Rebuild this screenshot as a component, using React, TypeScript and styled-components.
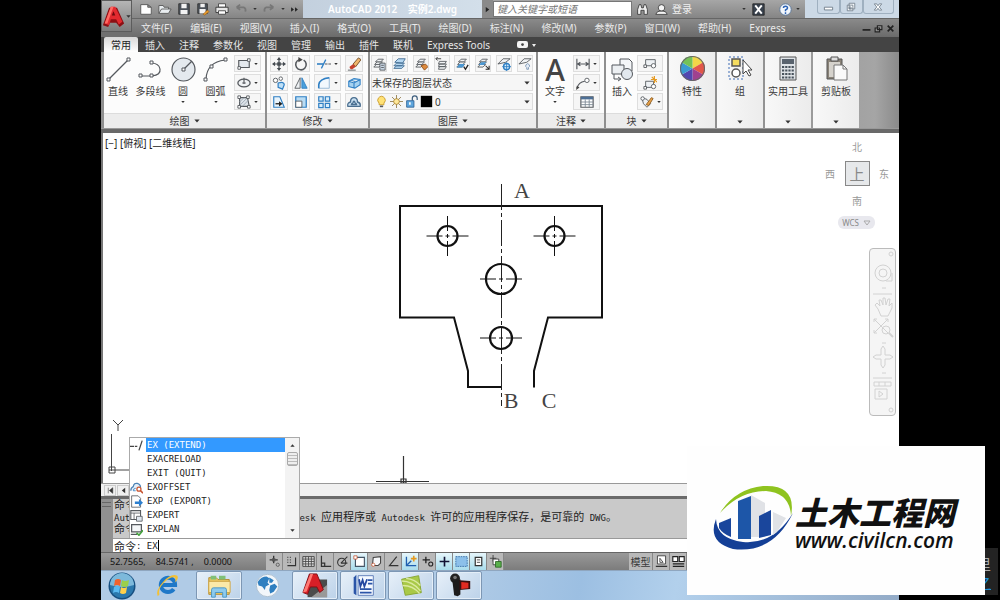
import React from 'react';
import styled, { createGlobalStyle, css } from 'styled-components';

const UI = `'Noto Sans', 'Noto Sans CJK SC', sans-serif`;
const MONO = `'DejaVu Sans Mono', 'Noto Sans CJK SC', monospace`;

const GlobalStyle = createGlobalStyle`
  * { box-sizing: border-box; }
  body { margin: 0; background: #000; font-family: ${UI}; font-size: 10px; line-height: 12px; color: #3a3a3a; }
  button, input, select { font: inherit; color: inherit; margin: 0; padding: 0; border: 0; background: none; outline: none; border-radius: 0; }
  ul { margin: 0; padding: 0; list-style: none; }
`;

/* ---------- icon drawings, 16 x 16 unless listed in `boxes` ---------- */

const G = '#55595e';
const B = '#2f7fc4';

const layers = (
  <g fill="#f2f4f6" stroke={G}>
    <path d="M2 11.500l3-3h6l-3 3z" />
    <path d="M3 8.500l3-3h6l-3 3z" />
    <path d="M4 5.500l3-3h6l-3 3z" />
  </g>
);

const drawings: Record<string, React.ReactNode> = {
  new: <path d="M2 3h8l4 3v8H2zM10 3v3h4" fill="#fff" stroke="#555" />,
  open: <path d="M1 13V4h5l1 2h5v2M1 13l3-5h11l-3 5z" fill="#e9edf0" stroke="#555" />,
  save: <><path d="M2 2h12v12H2z" fill="#4b5159" stroke="#333" /><path d="M5 2h6v5H5zM4 9h8v5H4z" fill="#f2f2f2" /></>,
  saveas: <><path d="M2 2h11v11H2z" fill="#4b5159" stroke="#333" /><path d="M5 2h5v4H5zM4 8h7v5H4z" fill="#f2f2f2" /><path d="M8 14l5-5 2 2-5 4z" fill="#e79a2c" stroke="#7b4a10" strokeWidth=".5" /></>,
  print: <><path d="M4 2h8v4H4z" fill="#fff" stroke="#444" /><path d="M1 6h14v6H1z" fill="#e6e6e6" stroke="#333" /><path d="M4 10h8v4H4z" fill="#fff" stroke="#444" /></>,
  undo: <path d="M3 6h8q3 1 2 5M3 6l4-3M3 6l4 3" fill="none" stroke="#777" strokeWidth="2" />,
  redo: <path d="M13 6H5q-3 1-2 5M13 6l-4-3M13 6l-4 3" fill="none" stroke="#777" strokeWidth="2" />,
  more: <path d="M2 4l5 4-5 4zM9 4l5 4-5 4z" fill="#222" />,
  play: <path d="M4 2l8 6-8 6z" fill="#222" />,
  caret: <path d="M1 4h14l-7 8z" fill="#333" />,
  binoc: <path d="M2 14V8l2-6h2l1 4h2l1-4h2l2 6v6h-4V9H6v5z" fill="#eee" stroke="#333" />,
  user: <><circle cx="8" cy="6" r="4" fill="#f5f5f5" stroke="#333" /><path d="M1 14q1-4 5-4h4q4 0 5 4z" fill="#f5f5f5" stroke="#333" /></>,
  exchange: <><path d="M1 1h14v14H1z" fill="#39424e" stroke="#222" /><path d="M4 3l4 5-4 5M12 3L8 8l4 5" fill="none" stroke="#fff" strokeWidth="2.400" /></>,
  help: <><circle cx="8" cy="8" r="7" fill="#f3f7fc" stroke="#54749c" /><path d="M5.500 6Q5.500 4 8 4t2.500 2.200Q10.500 7.500 8 8.600V10M8 11.500v2" fill="none" stroke="#2b62b5" strokeWidth="1.800" /></>,
  min: <path d="M2 9h12v4H2z" fill="#fff" stroke="#6d7a88" strokeWidth="1.300" />,
  max: <path d="M5 2h9v9H5zM2 5h9v9H2zM5 8h3v3H5z" fill="#f7fafc" stroke="#6d7a88" strokeWidth="1.300" />,
  close: <path d="M2 3h4l2 3 2-3h4l-4 5 4 5h-4l-2-3-2 3H2l4-5z" fill="#fff" stroke="#6d7a88" strokeWidth="1.300" />,
  dmin: <path d="M1 9h14v3H1z" fill="#222" />,
  dmax: <path d="M6 3h8v7H6zM2 7h8v7H2z" fill="#999" stroke="#222" strokeWidth="2" />,
  dclose: <path d="M3 3l10 10M13 3L3 13" stroke="#222" strokeWidth="3" />,
  cam: <><rect x="0" y="3" width="16" height="10" rx="3" fill="#f4f4f4" /><circle cx="8" cy="8" r="2" fill="#444" /></>,

  line: <><path d="M3 22L22 3" stroke={G} strokeWidth="1.200" /><path d="M1 21h3v3H1zM21 1h3v3h-3z" fill="#fff" stroke={G} /></>,
  pline: <><path d="M2 19h12q9-1 8-7-1-6-9-6" fill="none" stroke={G} strokeWidth="1.200" /><path d="M1 17h3v3H1zM12 17h3v3h-3zM12 4h3v3h-3z" fill="#fff" stroke={G} /></>,
  circle: <><circle cx="12.500" cy="12.500" r="11.500" fill="#e4e9ee" stroke={G} strokeWidth="1.200" /><path d="M12 13l9-9" stroke={G} strokeWidth="1.200" /><path d="M11 11h3v3h-3z" fill="#fff" stroke={G} /></>,
  arc: <><path d="M3 22Q4 5 22 3" fill="none" stroke={G} strokeWidth="1.200" /><path d="M1 21h3v3H1zM7 8h3v3H7zM21 1h3v3h-3z" fill="#fff" stroke={G} /></>,
  rect: <><path d="M2 4h12v8H2z" fill="#e4e9ee" stroke={G} strokeWidth="1.300" /><path d="M1 11h3v3H1zM12 2h3v3h-3z" fill="#fff" stroke={G} /></>,
  ellipse: <><ellipse cx="8" cy="8" rx="7" ry="4.500" fill="#f0f2f4" stroke={G} strokeWidth="1.500" /><path d="M8 2v7M6 8h4" stroke={G} strokeWidth="1.300" /></>,
  hatch: <><path d="M3 3h9l2 10H3z" fill="#dde3e9" stroke={G} strokeWidth="1.300" /><path d="M3 12l9-9M6 13l7-7M3 8l5-5" stroke="#9aa6b1" /><path d="M1 1h3v3H1zM11 1h3v3h-3zM1 12h3v3H1zM12 12h3v3h-3z" fill="#fff" stroke={G} /></>,

  move: <path d="M8 0l2.500 3.500h-5zM8 16l-2.500-3.500h5zM0 8l3.500-2.500v5zM16 8l-3.500 2.500v-5zM7.300 3h1.400v10H7.300zM3 7.300h10v1.400H3zM6 6h4v4H6z" fill="#444a50" />,
  rotate: <><path d="M6 3a6 6 0 1 0 5 .5" fill="none" stroke={G} strokeWidth="1.800" /><path d="M5 0l5 3-5 3z" fill="#444" /></>,
  trim: <><path d="M5 13L10 3" stroke={B} strokeWidth="1.500" /><path d="M0 8h7" stroke={B} strokeWidth="1.800" /><path d="M9 8h3M13 8h3" stroke={G} strokeWidth="1.300" /></>,
  erase: <><path d="M7 8l6-7 3 2-6 8z" fill="#f0b66c" stroke="#6b4720" /><path d="M3 11l4-3 3 3-4 3q-3 0-3-3z" fill="#c5402c" /><path d="M1 15h9" stroke={G} /></>,
  copy: <><circle cx="4" cy="5" r="2.500" fill="#fff" stroke={G} /><circle cx="10" cy="3" r="2" fill="#fff" stroke={G} /><path d="M7 8q7-2 7 2l-2 5-5-2z" fill="#bfe0f7" stroke={B} strokeWidth="1.400" /></>,
  mirror: <><path d="M7 2v12H1z" fill="#eef1f4" stroke={G} /><path d="M9 2v12h6z" fill="#4ba0dc" stroke={B} /></>,
  fillet: <><path d="M2 14V10Q3 3 14 2v12z" fill="#f2f8fd" stroke="#8fb4d2" /><path d="M2 14V10Q3 3 14 2" fill="none" stroke={B} strokeWidth="1.800" /></>,
  explode: <path d="M2 6l6-3 7 1v6l-6 4-7-2zM2 6l6 2 7-4M8 8v6M5 5l6 2" fill="#a6d2f1" stroke={B} strokeWidth="1.200" />,
  stretch: <><path d="M2 2h7l5 12H2z" fill="#e8f3fb" stroke={B} strokeWidth="1.300" /><path d="M4 10h5" stroke="#222" strokeWidth="1.500" /><path d="M8 7l4 3-4 3z" fill="#222" /></>,
  scale: <><path d="M2 2h12v12H2z" fill="#b9dcf4" stroke={B} strokeWidth="1.400" /><path d="M2 7h7v7H2z" fill="#fff" stroke={G} /></>,
  array: <path d="M2 2h5v5H2zM9.500 2h5v5h-5zM2 9.500h5v5H2zM9.500 9.500h5v5h-5z" fill="#d9edfa" stroke={B} strokeWidth="1.400" />,
  offset: <path d="M1 13q-1-4 3-5 0-5 4-5t4 5q4 1 3 5zM5 11q0-1 2-2 0-2 1-2t1 2q2 1 2 2z" fill="#c9dff0" stroke="#4b6f90" strokeWidth="1.500" />,

  lprop: <>{layers}<path d="M9 7h6v8H9z" fill="#c8d6e4" stroke={G} /><path d="M10.500 9.500h3M10.500 12h3" stroke={G} /></>,
  liso: <g fill="#b5d7f1" stroke="#3f6a91"><path d="M1 13l3-3h9l-3 3zM1 10l3-3h9l-3 3zM2 6l4-4h8l-3 5z" /></g>,
  lmatch: <>{layers}<path d="M8 10l5-2 3 3-4 4z" fill="#dd8a3d" stroke="#8d4f1e" /></>,
  lprev: <><path d="M5 5h8l-2 3H4zM5 8h8l-2 3H4zM5 11h8l-2 3H4z" fill="#f2f4f6" stroke={G} /><path d="M1 2h6M3 0L1 2l2 2" stroke="#333" fill="none" /></>,
  lset: <>{layers}<path d="M2 12l3-4h6l-2 4z" fill="#4a97d2" /><path d="M10 11l2 3 3-5" stroke="#222" fill="none" strokeWidth="1.500" /></>,
  ldown: <>{layers}<path d="M3 9l3-3h6l-3 3z" fill="#4a97d2" /><path d="M11 10l4 4M15 10v4h-4" stroke="#222" fill="none" strokeWidth="1.200" /></>,
  lfreeze: <><path d="M1 8l6-6h8l-5 4z" fill="#f2f4f6" stroke={G} /><circle cx="11" cy="11" r="3.500" fill="#d9effc" stroke={B} strokeWidth="1.600" /><path d="M11 6v10M6 11h10" stroke={B} /></>,
  loff: <><path d="M1 8l6-6h8l-5 4z" fill="#f2f4f6" stroke={G} /><path d="M9 9q2-3 4 0 1 2-1 3v2h-2v-2q-2-1-1-3z" fill="#e4ecf6" stroke="#7c96b4" /></>,
  bulb: <><path d="M5 10Q2 7 4 4q4-5 8 0 2 3-1 6v2H5z" fill="#ffe277" stroke="#c49320" /><path d="M6 14h4" stroke={G} strokeWidth="2" /></>,
  sun: <><path d="M8 0v16M0 8h16M2.500 2.500l11 11M13.500 2.500l-11 11" stroke="#8a7440" /><circle cx="8" cy="8" r="3.500" fill="#ffe89a" stroke="#a9802a" /></>,
  lock: <><path d="M9 7V4q0-3 3-3t3 3v2" fill="none" stroke="#3d5d7d" strokeWidth="1.500" /><path d="M2 7h9v8H2z" fill="#5fa6dd" stroke="#2a5f93" /><path d="M6 9v3" stroke="#fff" strokeWidth="2" /></>,
  black: <path d="M1 1h14v14H1z" fill="#000" />,

  dim: <path d="M1 2v12M15 2v12M2 8h12M5 6L2 8l3 2M11 6l3 2-3 2" fill="none" stroke={G} strokeWidth="1.300" />,
  leader: <><path d="M1 14Q3 7 10 6" fill="none" stroke={G} strokeWidth="1.300" /><circle cx="12.500" cy="5" r="2.500" fill="#fff" stroke={G} /><path d="M0 16l1-5 3 2z" fill="#444" /></>,
  table: <><path d="M1 2h14v12H1z" fill="#fff" stroke={G} strokeWidth="1.300" /><path d="M1 2h14v3H1z" fill="#4d6f95" /><path d="M1 8h14M1 11h14M6 5v9M10.500 5v9" stroke="#7c8894" /></>,
  insert: <><path d="M10 2h9l3 3v9H10z" fill="#f4f6f8" stroke={G} /><path d="M2 8h12v9H2z" fill="#eceff2" stroke={G} /><circle cx="17" cy="17" r="5.500" fill="#e2e8ee" stroke={G} /><path d="M4 17v5h6M8 20l3 2-3 2" fill="none" stroke={G} /></>,
  bcreate: <><path d="M3 3h11v7H3z" fill="#eef1f4" stroke={G} /><circle cx="12" cy="10" r="2.500" fill="#fff" stroke={G} /><path d="M1 9h3v3H1z" fill="#fff" stroke={G} /></>,
  bedit: <><path d="M3 6h9v7H3z" fill="#eef1f4" stroke={G} /><circle cx="12" cy="12" r="2.500" fill="#fff" stroke={G} /><path d="M1 12h3v3H1z" fill="#fff" stroke={G} /><path d="M13 0v8M9 4h7M10 1l6 6" stroke="#e59a22" strokeWidth="1.400" /></>,
  battr: <><path d="M2 3l6 2 4 5-4 4-4-4z" fill="#eef1f4" stroke={G} /><path d="M7 11l6-8 2 1-5 8z" fill="#e9a24a" stroke="#8c5a1c" /><circle cx="3" cy="4" r="2" fill="#fff" stroke={G} /></>,

  wheel: <><path d="M12 12V0a12 12 0 0 1 10.400 6z" fill="#f2d648" /><path d="M12 12l10.400-6a12 12 0 0 1 0 12z" fill="#e2574a" /><path d="M12 12l10.400 6A12 12 0 0 1 12 24z" fill="#a0418f" /><path d="M12 12v12a12 12 0 0 1-10.400-6z" fill="#5148b0" /><path d="M12 12L1.600 18a12 12 0 0 1 0-12z" fill="#3a9bd0" /><path d="M12 12L1.600 6A12 12 0 0 1 12 0z" fill="#74c257" /><circle cx="12" cy="12" r="11.500" fill="none" stroke="#666" /></>,
  group: <><path d="M1 1h14v22H1z" fill="none" stroke="#3e6db5" strokeDasharray="2 2" /><path d="M4 3h8v7H4z" fill="#f5dc5e" stroke="#555" strokeWidth="1.500" /><circle cx="8" cy="17" r="4" fill="#fff" stroke="#555" strokeWidth="1.500" /><path d="M15 4v14l3-3 3 5 2-1-3-5h4z" fill="#fff" stroke="#444" /></>,
  calc: <><path d="M4 1h16v23H4z" fill="#dfe3e7" stroke="#555" /><path d="M6 3h12v5H6z" fill="#59636e" /><path d="M6 11h12M6 14.500h12M6 18h12M6 21.500h12" stroke="#48525c" strokeWidth="2.200" strokeDasharray="2.200 1" /></>,
  paste: <><path d="M3 3h15v20H3z" fill="#8a8378" stroke="#555" /><path d="M5 6h11v15H5z" fill="#d5d2cc" /><path d="M7 1h7v4H7z" fill="#ddd" stroke="#555" /><path d="M10 9h9l4 4v11H10z" fill="#fafafa" stroke="#777" /><path d="M19 9v4h4" fill="none" stroke="#777" /></>,

  extend: <><path d="M0 9h5M6 9h3" stroke="#444" strokeWidth="1.500" /><path d="M11 14l4-12" stroke="#444" strokeWidth="1.500" /></>,
  cloud: <><path d="M1 12q0-4 3-5 1-5 5-4 4 1 4 5" fill="#e4eef7" stroke="#4b82b5" strokeWidth="1.500" /><path d="M4 12q0-3 3-3M4 12h3" stroke={B} fill="none" /><circle cx="11" cy="10" r="2.500" fill="#fff" stroke="#c7532f" strokeWidth="1.500" /><path d="M13 12l3 3" stroke="#c7532f" strokeWidth="2" /></>,
  export: <><path d="M2 1h8l3 3v11H2z" fill="#fff" stroke={G} /><path d="M6 8h5V5l5 4.500-5 4.500v-3H6z" fill="#2c7fcf" /></>,
  expert: <><path d="M1 2h12v11H1z" fill="#fff" stroke={G} strokeWidth="1.300" /><path d="M1 5h12M5 5v8" stroke={G} /><path d="M8 9h7v6H8z" fill="#dfe6ee" stroke={G} /></>,
  plan: <><path d="M2 2h12v9H2z" fill="#f5f7f9" stroke={G} strokeWidth="1.500" /><path d="M1 14h8" stroke={G} strokeWidth="1.500" /><path d="M8 12l3 3 5-6" stroke="#42a33b" strokeWidth="2" fill="none" /></>,

  s0: <><path d="M7 1v9M2 6h10" stroke="#333" strokeWidth="1.600" /><path d="M5 4h4v4H5z" fill="#555" /><circle cx="12" cy="12" r="2" fill="none" stroke="#555" /></>,
  s1: <path d="M3 3h1M6 3h1M3 6h1M6 6h1M3 9h1M6 9h1M3 13h10V3" fill="none" stroke="#333" strokeWidth="1.400" />,
  s2: <><path d="M1 2h14v12H1z" fill="#ddd" stroke="#333" /><path d="M1 5h14M1 8h14M1 11h14M4.500 2v12M8 2v12M11.500 2v12" stroke="#444" /></>,
  s3: <path d="M3 1v13h12M3 10h4v4" fill="none" stroke="#333" strokeWidth="1.500" />,
  s4: <><circle cx="7" cy="9" r="5" fill="none" stroke="#333" strokeWidth="1.300" /><path d="M6 10l8-8M6 10h8" stroke="#333" strokeWidth="1.300" /></>,
  s5: <><path d="M3 3h11v11H3z" fill="#fff" stroke="#456" strokeWidth="1.400" /><path d="M1 1h4v4H1z" fill="#fff" stroke="#c75b3a" /></>,
  s6: <><path d="M4 3l9-1v8l-3 3H3z" fill="#f6f8fa" stroke="#444" strokeWidth="1.300" /><circle cx="4" cy="12" r="2" fill="#fff" stroke="#c75b3a" /></>,
  s7: <path d="M12 2L3 13h11" fill="none" stroke="#333" strokeWidth="1.400" />,
  s8: <><path d="M3 2v11h12M4 12l5-5" fill="none" stroke="#1e5eae" strokeWidth="1.600" /><path d="M12 1v7M8.500 4.500h7" stroke="#e59a22" strokeWidth="2" /></>,
  s9: <><path d="M6 2v8M2 6h9" stroke="#222" strokeWidth="1.600" /><circle cx="12" cy="11" r="2.500" fill="none" stroke="#222" strokeWidth="1.300" /></>,
  s10: <path d="M8 2v12M2 8h12" stroke="#113" strokeWidth="2" />,
  s11: <path d="M1 2h14v12H1z" fill="#8cc0ea" stroke="#2b62a0" strokeDasharray="2 1" />,
  s12: <><path d="M4 3h8v10H4z" fill="#fff" stroke="#333" strokeWidth="1.500" /><path d="M6 6h4M6 9h4" stroke="#333" /></>,
  s13: <><path d="M5 0v8M1 4h8" stroke="#333" /><path d="M5 5h7v7H5z" fill="#fff" stroke="#333" /><path d="M8 8h7v7H8z" fill="#59b04a" stroke="#2a6322" /></>,
  layout: <><path d="M3 1h10v10H3z" fill="#fff" stroke="#333" /><path d="M6 4l4 5H6z" fill="none" stroke="#333" /><path d="M1 14h14" stroke="#333" strokeWidth="1.600" /></>,
  quick: <path d="M1 2h6v6H1zM9 2h6v6H9zM1 11h14M1 14h14" fill="#fff" stroke="#222" strokeWidth="1.400" />,
  first: <path d="M4 3v10M12 3L6 8l6 5z" fill="#333" stroke="#333" />,
  prev: <path d="M11 3L5 8l6 5z" fill="#333" />,

  logo: <><path d="M1 23L8 3h9l8 18-5 4-4-5H9l-2 5z" fill="#8c0f14" /><path d="M3 21L10 2h5l8 17-4 3-3-6h-6l-2 7z" fill="#e22a2f" /><path d="M11 12l2-5 2 5z" fill="#6f0a0e" /><path d="M10 2h3L6 21H3z" fill="#ff6a63" /></>,
  wstart: <><circle cx="14" cy="14" r="13.500" fill="#174f80" /><circle cx="14" cy="14" r="12" fill="#2b78ad" /><path d="M2 13a12 12 0 0 1 24 0q-12 4-24 0z" fill="#7db9db" /><path d="M7 8q3-2 6 0l-1 6q-3-2-6 0z" fill="#f0622d" /><path d="M14 8q3 2 7 0l-1 6q-4 2-7 0z" fill="#9bd04a" /><path d="M6 15q3-2 6 0l-1 6q-3-2-6 0z" fill="#5ab9f0" /><path d="M13 15q3 2 6 0l-1 6q-3 2-6 0z" fill="#ffd04a" /></>,
  ie: <><path d="M21 18a8 8 0 1 1 1.500-4.500H8" fill="none" stroke="#1e78c8" strokeWidth="4.500" /><path d="M3 26Q0 20 9 10T25 3q2 3-3 8 2-4 0-6-5-1-12 6T5 24z" fill="#f3c034" /></>,
  folder: <><path d="M3 5h8l2 2h12v16H3z" fill="#e9c65f" stroke="#b58b2c" /><path d="M5 3h6v4H5zM14 3h7v4h-7z" fill="#7fc077" /><path d="M3 9h23v12H3z" fill="#fbe9a8" stroke="#cda547" /><path d="M6 26v-8q0-2 2-2h12q2 0 2 2v8h-4v-5h-8v5z" fill="#8dcbee" stroke="#4a94c4" /></>,
  globe: <><circle cx="14" cy="14" r="12.500" fill="#f2f6fa" stroke="#a8bccd" /><path d="M3 10q4-6 10-6l3 2-2 5 2 2-4 2-1 4-3-4-4-1zM16 5l5 3-2 3h-3zM17 14l5-2 3 3-4 6-4 2-1-4z" fill="#2f7fc0" /></>,
  acad: <><path d="M6 7h21v19H6z" fill="#4b4b4b" /><path d="M10 26l17-13v13z" fill="#999" /><path d="M1 21L8 1h8l7 17-4 3-3-6H9l-3 8z" fill="#d71f27" stroke="#7f0d12" /><path d="M9 1h3L5 20l-4 1z" fill="#ff7a74" /></>,
  word: <><path d="M8 3h17v22H8z" fill="#f5f9ff" stroke="#5676b4" /><path d="M19 8h5M19 12h5M10 18h13M10 22h13" stroke="#2b55a8" strokeWidth="2" /><path d="M3 5l3-3v23l-3-2z" fill="#2b55a8" /><path d="M9 7l1.500 8L13 8l2 7 3-8" fill="none" stroke="#2448a0" strokeWidth="2" /></>,
  green: <><path d="M3 7l19-4 3 19-18 3z" fill="#a9c948" stroke="#84a32d" /><path d="M3 9q12 0 21 11M4 14q12 0 19 9M8 6q10 1 16 8" fill="none" stroke="#dbeaa0" strokeWidth="1.500" /></>,
  recorder: <><circle cx="9" cy="6" r="5.500" fill="#222" /><path d="M6 9l9-2v17l-3 2-4-1z" fill="#1c1c1c" /><path d="M14 8l12 1v9l-12 1z" fill="#3a0f0f" /><path d="M16 10l8 1v6l-8 1z" fill="#e22b22" /><circle cx="9" cy="5" r="2" fill="#777" /></>,
};

const boxes: Record<string, number> = {
  line: 25, pline: 25, circle: 25, arc: 25, insert: 25, wheel: 24, group: 25, calc: 25, paste: 25, logo: 26,
  wstart: 28, ie: 28, folder: 28, globe: 28, acad: 28, word: 28, green: 28, recorder: 28,
};

const Svg = styled.svg<{ $s: number }>`
  display: block;
  flex: none;
  width: ${p => p.$s}px;
  height: ${p => p.$s}px;
`;
const Icon = ({ n, s = 14 }: { n: string; s?: number }) => {
  const b = boxes[n] || 16;
  return <Svg $s={s} viewBox={`0 0 ${b} ${b}`} aria-hidden="true">{drawings[n]}</Svg>;
};

/* ---------- page frame ---------- */

const Stage = styled.div`
  position: relative;
  display: flex;
  justify-content: center;
  min-height: 100vh;
  padding: 0 101px;
  background: #000;
  overflow: hidden;
`;
const Desktop = styled.main`
  flex: 1;
  min-width: 0;
  display: flex;
  flex-direction: column;
  background: #6a6a6a;
`;

/* ---------- title and menu ---------- */

const Header = styled.header`
  display: flex;
  height: 37px;
  background: #707070;
`;
const AppButton = styled.button`
  display: flex;
  align-items: center;
  justify-content: center;
  gap: 1px;
  width: 31px;
  height: 32px;
  border: 1px solid #5c5c5c;
  background: linear-gradient(#b5b5b5, #7d7d7d);
`;
const HeaderRows = styled.div`
  flex: 1;
  min-width: 0;
`;
const TitleBar = styled.div`
  display: flex;
  height: 19px;
  background: linear-gradient(#a6a6a6, #858585);
  border-bottom: 1px solid #666;
`;
const QuickBar = styled.div`
  display: flex;
  align-items: center;
  gap: 5px;
  width: 171px;
  padding-left: 7px;
`;
const PlainButton = styled.button`
  display: flex;
  align-items: center;
  gap: 4px;
`;
const Title = styled.h1`
  flex: 1;
  margin: 0;
  padding-top: 3px;
  text-align: center;
  font-size: 10px;
  line-height: 13px;
  font-weight: 600;
  white-space: pre;
  color: #fff;
  background: linear-gradient(90deg, #c3d0de, #d3dfea);
`;
const SearchToggle = styled.button`
  display: flex;
  align-items: center;
  justify-content: center;
  width: 11px;
  background: #8a8a8a;
`;
const Search = styled.input`
  width: 139px;
  height: 16px;
  margin-top: 1px;
  padding-left: 3px;
  background: #fff;
  border: 1px solid #777;
  font-style: italic;
  &::placeholder { color: #777; opacity: 1; }
`;
const InfoBar = styled.div`
  display: flex;
  align-items: center;
  gap: 6px;
  width: 173px;
  padding: 0 5px 0 4px;
  color: #f0f0f0;
`;
const Push = styled.span`
  flex: 1;
`;
const Gap = styled.span`
  width: 2px;
`;
const WindowButtons = styled.div`
  display: flex;
  width: 94px;
  padding: 0 5px 4px 12px;
  background: #ccd9e6;
`;
const WindowButton = styled.button<{ $wide?: boolean }>`
  display: flex;
  align-items: center;
  justify-content: center;
  flex: ${p => (p.$wide ? 7 : 5)};
  border: 1px solid #9fb0c0;
  border-top: 0;
  border-radius: 0 0 3px 3px;
`;
const MenuBar = styled.nav`
  display: flex;
  align-items: center;
  gap: 18px;
  height: 18px;
  padding: 0 4px 0 9px;
  background: linear-gradient(#8a8a8a, #6b6b6b);
  color: #e9e9e9;
`;
const MenuItem = styled.button`
  white-space: nowrap;
`;
const DocButtons = styled.div`
  display: flex;
  gap: 3px;
  margin-left: auto;
`;

/* ---------- ribbon ---------- */

const Tabs = styled.div`
  display: flex;
  align-items: stretch;
  height: 15px;
  padding-left: 3px;
  background: #444;
  color: #e6e6e6;
`;
const Tab = styled.button<{ $active?: boolean }>`
  display: flex;
  align-items: center;
  padding: 0 7px;
  white-space: nowrap;
  ${p => p.$active && css`
    background: linear-gradient(#d8d8d8, #fff);
    color: #222;
    border-radius: 2px 2px 0 0;
  `}
`;
const TabExtra = styled(PlainButton)`
  margin-left: 20px;
`;
const Ribbon = styled.section`
  display: flex;
  gap: 2px;
  height: 76px;
  padding-left: 3px;
  background: linear-gradient(90deg, #8f8f8f 80%, #a5a5a5 97%, #8a8a8a);
`;
const Panel = styled.div<{ $w: number }>`
  display: flex;
  flex-direction: column;
  width: ${p => p.$w}px;
  background: #fcfcfc;
`;
const PanelBody = styled.div<{ $inset?: number }>`
  flex: 1;
  display: flex;
  justify-content: space-between;
  padding: 3px 4px 0 ${p => p.$inset || 0}px;
`;
const PanelName = styled.button`
  display: flex;
  align-items: center;
  justify-content: center;
  gap: 4px;
  height: 15px;
  border-top: 1px solid #dcdcdc;
  background: #ececec;
`;
const BigTool = styled.button<{ $w?: number }>`
  display: flex;
  flex-direction: column;
  align-items: center;
  gap: 3px;
  width: ${p => p.$w || 28}px;
  height: 54px;
  padding-top: 2px;
  white-space: nowrap;
`;
const Grid = styled.div<{ $cols: string }>`
  display: grid;
  grid-template-columns: ${p => p.$cols};
  grid-auto-rows: 17px;
  gap: 2px 4px;
  align-content: start;
`;
const ToolFrame = styled.button`
  display: flex;
  align-items: center;
  justify-content: space-around;
  border: 1px solid #dedede;
  background: #f6f6f6;
`;
const LayerBody = styled.div`
  flex: 1;
  display: flex;
  flex-direction: column;
  gap: 2px;
  padding: 3px 3px 0 1px;
`;
const LayerTools = styled.div`
  display: flex;
  justify-content: space-between;
  height: 17px;
`;
const Field = styled.label`
  display: flex;
  align-items: center;
  gap: 2px;
  height: 17px;
  padding: 0 2px 0 0;
  border: 1px solid #dedede;
  background: #f6f6f6;
`;
const LayerMarks = styled.span`
  display: flex;
  gap: 2px;
  padding-left: 3px;
`;
const Select = styled.select`
  flex: 1;
  min-width: 0;
  appearance: none;
`;
const BigLetter = styled.span`
  height: 25px;
  font-family: 'Noto Sans', sans-serif;
  font-size: 30px;
  line-height: 25px;
  font-weight: 500;
  color: #444;
`;
const SlimPanel = styled.button`
  display: flex;
  flex-direction: column;
  align-items: center;
  gap: 4px;
  width: 46px;
  padding: 4px 0 3px;
  white-space: nowrap;
  background: linear-gradient(90deg, #f8f8f8, #ececec);
`;
const Divider = styled.div`
  height: 5px;
  background: #696969;
  border-top: 1px solid #999;
`;

/* ---------- drawing area ---------- */

const Canvas = styled.section`
  position: relative;
  flex: 1;
  min-height: 350px;
  background: #fff;
  border-left: 2px solid #777;
`;
const ViewLabel = styled.p`
  position: absolute;
  top: 4px;
  left: 2px;
  margin: 0;
  color: #222;
`;
const Drawing = styled.svg`
  position: absolute;
  inset: 0;
  width: 100%;
  height: 100%;
`;
const Ucs = styled.svg`
  position: absolute;
  left: 4px;
  bottom: 3px;
  width: 40px;
  height: 60px;
`;
const Compass = styled.div`
  position: absolute;
  top: 7px;
  right: 8px;
  display: grid;
  grid-template-columns: 14px 26px 14px;
  grid-template-rows: 13px 27px 13px;
  grid-template-areas: '. n .' 'w c e' '. s .';
  column-gap: 7px;
  row-gap: 7px;
  place-items: center;
  color: #999;
`;
const Face = styled.button<{ $area: string; $cube?: boolean }>`
  grid-area: ${p => p.$area};
  ${p => p.$cube && css`
    width: 25px;
    height: 25px;
    border: 1px solid #888;
    background: #e6e8ea;
    font-size: 15px;
    color: #888;
  `}
`;
const Wcs = styled.button`
  position: absolute;
  top: 83px;
  right: 24px;
  display: flex;
  align-items: center;
  gap: 4px;
  height: 13px;
  padding: 0 4px;
  border-radius: 6px;
  background: #e8e8ee;
  font-size: 8px;
  color: #888;
`;
const NavBar = styled.div`
  position: absolute;
  top: 115px;
  right: 3px;
  width: 27px;
  height: 168px;
  border: 1px solid #bbb;
  border-radius: 4px;
  background: #f5f5f5;
`;

/* ---------- command area ---------- */

const SheetBar = styled.div`
  display: flex;
  align-items: center;
  gap: 1px;
  height: 13px;
  padding-left: 3px;
  border-top: 1px solid #999;
  background: #f0f0f0;
`;
const SheetButton = styled.button`
  display: flex;
  align-items: center;
  justify-content: center;
  width: 12px;
  height: 11px;
  border: 1px solid #ccc;
`;
const Command = styled.section`
  position: relative;
  display: flex;
  height: 56px;
  border-top: 3px solid #6b6b6b;
  background: #c9c9c9;
  font-family: ${MONO};
  font-size: 9px;
  color: #222;
`;
const Grip = styled.div`
  width: 12px;
  padding: 3px 2px 0 1px;
  background: #909090;
  &::before { content: ''; display: block; height: 3px; border: solid #666; border-width: 1px 0; }
`;
const CommandText = styled.div`
  flex: 1;
  min-width: 0;
  display: flex;
  flex-direction: column;
`;
const History = styled.div`
  flex: 1;
  overflow: hidden;
  padding: 0 1px;
`;
const Line = styled.p`
  height: 12px;
  margin: 0;
  white-space: pre;
  line-height: 12px;
`;
const Han = styled.span`
  font-family: 'Noto Sans CJK SC', sans-serif;
  font-size: 11px;
  line-height: 10px;
`;
const Prompt = styled.label`
  display: flex;
  align-items: center;
  height: 14px;
  padding-left: 1px;
  white-space: pre;
  background: #fff;
  border-top: 1px solid #999;
`;
const PromptInput = styled.input`
  width: 2ch;
`;
const Cursor = styled.span`
  width: 1px;
  height: 11px;
  background: #000;
`;
const Suggest = styled.div`
  position: absolute;
  left: 28px;
  bottom: 14px;
  display: flex;
  width: 171px;
  height: 101px;
  border: 1px solid #aaa;
  border-bottom: 0;
  background: #fff;
`;
const Options = styled.ul`
  flex: 1;
`;
const Option = styled.li<{ $on?: boolean }>`
  display: flex;
  align-items: center;
  height: 14px;
  white-space: pre;
`;
const OptionText = styled.span<{ $on?: boolean }>`
  flex: 1;
  margin-left: 3px;
  padding-left: 1px;
  line-height: 14px;
  ${p => p.$on && css`background: #3399ff; color: #fff;`}
`;
const ScrollBar = styled.div`
  display: flex;
  flex-direction: column;
  align-items: center;
  width: 14px;
  padding: 5px 0;
  background: #f3f3f3;
`;
const Thumb = styled.span`
  width: 11px;
  height: 14px;
  margin: 4px 0 auto;
  border: 1px solid #aaa;
  border-radius: 2px;
  background: repeating-linear-gradient(#eee 0 2px, #bbb 2px 3px);
`;
const Flip = styled.span`
  transform: rotate(180deg);
`;

/* ---------- status and task bars ---------- */

const Status = styled.footer`
  display: flex;
  align-items: center;
  height: 18px;
  padding-right: 212px;
  border-top: 1px solid #666;
  background: linear-gradient(#999, #7c7c7c);
`;
const Coords = styled.output`
  display: flex;
  gap: 10px;
  width: 165px;
  padding-left: 9px;
  font-size: 9px;
  color: #111;
`;
const Toggle = styled.button<{ $on?: boolean; $w?: number }>`
  display: flex;
  align-items: center;
  justify-content: center;
  width: ${p => p.$w || 17}px;
  height: 17px;
  border-right: 1px solid #888;
  background: ${p => (p.$on ? 'linear-gradient(#e6f6fb, #a9dcec)' : '#b9b9b9')};
`;
const TaskBar = styled.div`
  display: flex;
  align-items: center;
  gap: 2px;
  height: 30px;
  padding-left: 5px;
  border-top: 1px solid #8fa6bf;
  background: linear-gradient(100deg, #b0cbe6 45%, #9cbfe2 60%, #b2d0ec 72%, #93abc7);
`;
const Task = styled.button<{ $open?: boolean; $w?: number }>`
  display: flex;
  align-items: center;
  justify-content: center;
  width: ${p => p.$w || 46}px;
  height: 29px;
  border-radius: 2px;
  ${p => p.$open && css`
    border: 1px solid #7d97b4;
    background: linear-gradient(135deg, #e7f0f9, #bcd2e9);
    box-shadow: inset 0 0 0 1px #e4eef8;
  `}
`;

/* ---------- overlays ---------- */

const Brand = styled.aside`
  position: absolute;
  right: 15px;
  bottom: 5px;
  display: flex;
  align-items: center;
  gap: 1px;
  width: 298px;
  height: 149px;
  padding: 0 20px 3px 26px;
  background: #fefefe;
`;
const BrandMark = styled.svg`
  flex: none;
  width: 81px;
  height: 68px;
`;
const BrandText = styled.div`
  padding-top: 8px;
  color: #111;
  font-style: italic;
  white-space: nowrap;
`;
const BrandName = styled.strong`
  display: block;
  font-family: 'Noto Sans CJK SC', sans-serif;
  font-size: 32px;
  line-height: 34px;
  font-weight: 900;
`;
const BrandLink = styled.a`
  display: block;
  font-family: 'Open Sans', sans-serif;
  font-size: 21px;
  line-height: 24px;
  font-weight: 600;
  color: #111;
  text-decoration: none;
`;
const Corner = styled.aside`
  position: absolute;
  right: 2px;
  bottom: 5px;
  width: 26px;
  height: 47px;
  padding: 7px 0 0 4px;
  background: #232323;
  font-size: 15px;
  line-height: 18px;
  color: #aaa;
`;
const CornerLink = styled.a`
  display: block;
  color: #1c8fd6;
`;

const Mixed = ({ text }: { text: string }) => (
  <>
    {text.split(/([\u3000-\u9fff\uff00-\uffef]+)/).map((part, i) =>
      i % 2 ? <Han key={i}>{part}</Han> : part
    )}
  </>
);

const Tool = ({ n, label, split }: { n: string; label: string; split?: boolean }) => (
  <ToolFrame aria-label={label}>
    <Icon n={n} s={14} />
    {split && <Icon n="caret" s={4} />}
  </ToolFrame>
);

const Hole = ({ x, y, r, arm }: { x: number; y: number; r: number; arm: number }) => (
  <g fill="none" stroke="#111">
    <circle cx={x} cy={y} r={r} strokeWidth="2.200" />
    <path d={`M${x - arm} ${y}h${arm - 5}M${x - 2} ${y}h4M${x + 5} ${y}h${arm - 5}`} />
    <path d={`M${x} ${y - arm + 1}v${arm - 6}M${x} ${y - 2}v4M${x} ${y + 5}v${arm - 6}`} />
  </g>
);
const AxisHole = ({ x, y, r, arm }: { x: number; y: number; r: number; arm: number }) => (
  <g fill="none" stroke="#111">
    <circle cx={x} cy={y} r={r} strokeWidth="2.200" />
    <path d={`M${x - arm} ${y}h${arm - 5}M${x - 2} ${y}h4M${x + 5} ${y}h${arm - 5}`} />
  </g>
);

const menus = ['文件(F)', '编辑(E)', '视图(V)', '插入(I)', '格式(O)', '工具(T)', '绘图(D)', '标注(N)', '修改(M)', '参数(P)', '窗口(W)', '帮助(H)', 'Express'];
const tabs = ['常用', '插入', '注释', '参数化', '视图', '管理', '输出', '插件', '联机', 'Express Tools'];
const options = [
  ['extend', 'EX (EXTEND)'], ['', 'EXACRELOAD'], ['', 'EXIT (QUIT)'], ['cloud', 'EXOFFSET'],
  ['export', 'EXP (EXPORT)'], ['expert', 'EXPERT'], ['plan', 'EXPLAN'],
];
const toggles = ['推断约束', '捕捉', '栅格', '正交', '极轴', '对象捕捉', '三维捕捉', '对象追踪', '动态UCS', '动态输入', '线宽', '透明度', '快捷特性', '选择循环'];
const activeToggles = [5, 8, 10, 11, 12];
const slim = [['wheel', '特性'], ['group', '组'], ['calc', '实用工具'], ['paste', '剪贴板']];

export default function App() {
  return (
    <>
      <GlobalStyle />
      <Stage>
        <Desktop>
          <Header>
            <AppButton aria-label="应用程序菜单"><Icon n="logo" s={23} /><Icon n="caret" s={5} /></AppButton>
            <HeaderRows>
              <TitleBar>
                <QuickBar>
                  {['new', 'open', 'save', 'saveas', 'print', 'undo'].map(n => <PlainButton key={n} aria-label={n}><Icon n={n} /></PlainButton>)}
                  <Icon n="caret" s={4} />
                  <PlainButton aria-label="redo"><Icon n="redo" /></PlainButton>
                  <Icon n="caret" s={4} />
                  <PlainButton aria-label="more"><Icon n="more" s={9} /></PlainButton>
                </QuickBar>
                <Title>{'AutoCAD 2012    实例2.dwg'}</Title>
                <SearchToggle aria-label="搜索"><Icon n="play" s={7} /></SearchToggle>
                <Search aria-label="搜索" placeholder="键入关键字或短语" />
                <InfoBar>
                  <PlainButton aria-label="查找"><Icon n="binoc" s={13} /></PlainButton>
                  <PlainButton><Icon n="user" s={13} />登录</PlainButton>
                  <Push />
                  <Icon n="caret" s={4} />
                  <PlainButton aria-label="交换"><Icon n="exchange" s={13} /></PlainButton>
                  <Gap />
                  <PlainButton aria-label="帮助"><Icon n="help" s={13} /><Icon n="caret" s={4} /></PlainButton>
                </InfoBar>
                <WindowButtons>
                  <WindowButton aria-label="最小化"><Icon n="min" s={11} /></WindowButton>
                  <WindowButton aria-label="还原"><Icon n="max" s={10} /></WindowButton>
                  <WindowButton aria-label="关闭" $wide><Icon n="close" s={10} /></WindowButton>
                </WindowButtons>
              </TitleBar>
              <MenuBar>
                {menus.map(m => <MenuItem key={m}>{m}</MenuItem>)}
                <DocButtons>
                  {['dmin', 'dmax', 'dclose'].map(n => <PlainButton key={n} aria-label={n}><Icon n={n} s={9} /></PlainButton>)}
                </DocButtons>
              </MenuBar>
            </HeaderRows>
          </Header>

          <Tabs>
            {tabs.map((t, i) => <Tab key={t} $active={i === 0}>{t}</Tab>)}
            <TabExtra aria-label="显示选项"><Icon n="cam" s={11} /><Svg $s={4} viewBox="0 0 4 4"><path d="M0 1h4L2 4z" fill="#eee" /></Svg></TabExtra>
          </Tabs>

          <Ribbon>
            <Panel $w={161}>
              <PanelBody>
                <BigTool><Icon n="line" s={25} />直线</BigTool>
                <BigTool><Icon n="pline" s={25} />多段线</BigTool>
                <BigTool><Icon n="circle" s={25} />圆<Icon n="caret" s={4} /></BigTool>
                <BigTool><Icon n="arc" s={25} />圆弧<Icon n="caret" s={4} /></BigTool>
                <Grid $cols="27px">
                  <Tool n="rect" label="矩形" split />
                  <Tool n="ellipse" label="椭圆" split />
                  <Tool n="hatch" label="图案填充" split />
                </Grid>
              </PanelBody>
              <PanelName>绘图<Icon n="caret" s={6} /></PanelName>
            </Panel>
            <Panel $w={101}>
              <PanelBody $inset={3}>
                <Grid $cols="18px 18px 27px 18px">
                  <Tool n="move" label="移动" /><Tool n="rotate" label="旋转" /><Tool n="trim" label="修剪" split /><Tool n="erase" label="删除" />
                  <Tool n="copy" label="复制" /><Tool n="mirror" label="镜像" /><Tool n="fillet" label="圆角" split /><Tool n="explode" label="分解" />
                  <Tool n="stretch" label="拉伸" /><Tool n="scale" label="缩放" /><Tool n="array" label="阵列" split /><Tool n="offset" label="偏移" />
                </Grid>
              </PanelBody>
              <PanelName>修改<Icon n="caret" s={6} /></PanelName>
            </Panel>
            <Panel $w={166}>
              <LayerBody>
                <LayerTools>
                  {['lprop', 'liso', 'lmatch', 'lprev', 'lset', 'ldown', 'lfreeze', 'loff'].map(n => <Tool key={n} n={n} label={n} />)}
                </LayerTools>
                <Field>
                  <Select aria-label="图层状态"><option>未保存的图层状态</option></Select>
                  <Icon n="caret" s={6} />
                </Field>
                <Field>
                  <LayerMarks><Icon n="bulb" s={13} /><Icon n="sun" s={13} /><Icon n="lock" s={13} /><Icon n="black" s={13} /></LayerMarks>
                  <Select aria-label="图层"><option>0</option></Select>
                  <Icon n="caret" s={6} />
                </Field>
              </LayerBody>
              <PanelName>图层<Icon n="caret" s={6} /></PanelName>
            </Panel>
            <Panel $w={66}>
              <PanelBody $inset={3}>
                <BigTool><BigLetter>A</BigLetter>文字<Icon n="caret" s={4} /></BigTool>
                <Grid $cols="27px">
                  <Tool n="dim" label="标注" split />
                  <Tool n="leader" label="引线" split />
                  <Tool n="table" label="表格" />
                </Grid>
              </PanelBody>
              <PanelName>注释<Icon n="caret" s={6} /></PanelName>
            </Panel>
            <Panel $w={61}>
              <PanelBody $inset={2}>
                <BigTool><Icon n="insert" s={25} />插入</BigTool>
                <Grid $cols="26px">
                  <Tool n="bcreate" label="创建" />
                  <Tool n="bedit" label="编辑" />
                  <Tool n="battr" label="编辑属性" split />
                </Grid>
              </PanelBody>
              <PanelName>块<Icon n="caret" s={6} /></PanelName>
            </Panel>
            {slim.map(([n, t]) => (
              <SlimPanel key={n}><Icon n={n} s={25} />{t}<Push /><Icon n="caret" s={6} /></SlimPanel>
            ))}
          </Ribbon>
          <Divider />

          <Canvas>
            <ViewLabel>[−] [俯视] [二维线框]</ViewLabel>
            <Drawing viewBox="103 133 796 350" preserveAspectRatio="xMidYMid meet" aria-label="图形">
              <path d="M501.500 387H468v-16L454 317.500h-54V206h202v111.500h-54L534 371v16.500" fill="none" stroke="#111" strokeWidth="2" />
              <path d="M501.500 184v222" stroke="#222" strokeDasharray="26 3 4 3" />
              <Hole x={447.500} y={236} r={10} arm={21} />
              <Hole x={554.500} y={236} r={10} arm={21} />
              <AxisHole x={501} y={279} r={15} arm={21} />
              <AxisHole x={501} y={338} r={11} arm={21} />
              <g fontFamily="'Liberation Serif', serif" fontSize="22" fill="#444" textAnchor="middle">
                <text x="522" y="198">A</text>
                <text x="511" y="408">B</text>
                <text x="549" y="408">C</text>
              </g>
              <path d="M403.500 456v27M376 481.500h53M401 479h5v4h-5z" fill="none" stroke="#333" strokeWidth="1.200" />
            </Drawing>
            <Ucs viewBox="0 0 40 60" aria-hidden="true">
              <path d="M6 0l5 5 5-5M11 5v6M4.500 14v37M2 47h6v6H2zM2 50h36" fill="none" stroke="#444" />
            </Ucs>
            <Compass>
              <Face $area="n">北</Face>
              <Face $area="w">西</Face>
              <Face $area="c" $cube>上</Face>
              <Face $area="e">东</Face>
              <Face $area="s">南</Face>
            </Compass>
            <Wcs>WCS <Svg $s={8} viewBox="0 0 8 8"><path d="M1 2h6L4 6z" fill="none" stroke="#aaa" /></Svg></Wcs>
            <NavBar>
              <svg width="25" height="166" viewBox="0 0 25 166" fill="none" stroke="#d2d2d2" aria-label="导航栏">
                <circle cx="21" cy="5" r="2" /><circle cx="21" cy="161" r="2" />
                <circle cx="13" cy="24" r="8" /><circle cx="13" cy="24" r="4" /><path d="M16 32h6v-8M3 45h19M3 129h19M12 39h4M12 94h4M12 124h4" />
                <path d="M8 60l-3-4 2-2 3 3-1-6h2l2 5v-7h2l1 7 2-6h2l-1 7 3-3v5l-4 8h-7z" />
                <path d="M4 70l14 14M18 70L4 84M4 73v-3h3M15 70h3v3M4 81v3h3" /><circle cx="16" cy="81" r="4" /><path d="M19 84l4 4" strokeWidth="2" />
                <path d="M11 100l2-3 2 3v6h5l3 2-3 2h-5v6l-2 3-2-3v-6H6l-3-2 3-2h5z" />
                <path d="M4 133h17v4H4zM9 133v4M15 133v4M5 140h12v10H5zM9 142v6l4-3z" />
              </svg>
            </NavBar>
          </Canvas>

          <SheetBar>
            <SheetButton aria-label="第一个"><Icon n="first" s={9} /></SheetButton>
            <SheetButton aria-label="上一个"><Icon n="prev" s={9} /></SheetButton>
          </SheetBar>

          <Command>
            <Grip />
            <CommandText>
              <History>
                <Line><Mixed text="命令:" /></Line>
                <Line><Mixed text="Autodesk DWG。  此文件上次由 Autodesk 应用程序或 Autodesk 许可的应用程序保存，是可靠的 DWG。" /></Line>
                <Line><Mixed text="命令:" /></Line>
              </History>
              <Prompt htmlFor="command">
                <Mixed text="命令: " />
                <PromptInput id="command" defaultValue="EX" /><Cursor />
              </Prompt>
            </CommandText>
            <Suggest>
              <Options role="listbox" aria-label="命令建议">
                {options.map(([n, t], i) => (
                  <Option key={t} role="option" aria-selected={i === 0}>
                    <Icon n={n} s={13} />
                    <OptionText $on={i === 0}>{t}</OptionText>
                  </Option>
                ))}
              </Options>
              <ScrollBar>
                <Flip><Icon n="caret" s={5} /></Flip>
                <Thumb />
                <Icon n="caret" s={5} />
              </ScrollBar>
            </Suggest>
          </Command>

          <Status>
            <Coords><span>52.7565,</span><span>84.5741 ,</span><span>0.0000</span></Coords>
            {toggles.map((t, i) => (
              <Toggle key={t} aria-label={t} $on={activeToggles.includes(i)}><Icon n={`s${i}`} s={13} /></Toggle>
            ))}
            <Push />
            <Toggle $w={24}>模型</Toggle>
            <Toggle aria-label="布局"><Icon n="layout" s={13} /></Toggle>
            <Toggle aria-label="快速查看"><Icon n="quick" s={13} /></Toggle>
          </Status>

          <TaskBar>
            <Task aria-label="开始" $w={32}><Icon n="wstart" s={28} /></Task>
            <Task aria-label="Internet Explorer" $w={54}><Icon n="ie" s={25} /></Task>
            <Task aria-label="资源管理器" $open><Icon n="folder" s={26} /></Task>
            <Task aria-label="浏览器"><Icon n="globe" s={25} /></Task>
            <Task aria-label="AutoCAD" $open><Icon n="acad" s={26} /></Task>
            <Task aria-label="Word" $open><Icon n="word" s={25} /></Task>
            <Task aria-label="图片" $open><Icon n="green" s={25} /></Task>
            <Task aria-label="录像" $open><Icon n="recorder" s={25} /></Task>
          </TaskBar>
        </Desktop>

        <Corner>里<CornerLink href="#">之</CornerLink></Corner>
        <Brand>
          <BrandMark viewBox="0 0 81 68">
            <path d="M7 28Q22 4 50 1q34-2 28 30-1-23-25-25Q27 6 7 28z" fill="#8fc31f" />
            <path d="M3 34Q-6 57 20 64q40 5 60-36-20 32-50 29Q4 54 3 34z" fill="#143f96" />
            <path d="M38 10l14 8v34H38z" fill="#e0e2e6" /><path d="M60 27l13 6-9 14-4 3z" fill="#e0e2e6" />
            <path d="M25 16l13-5v43H25z" fill="#1d56a8" /><path d="M6 38l12-5v19q-8-3-12-9z" fill="#1a469c" /><path d="M46 31l12-6v25l-12 3z" fill="#1a469c" />
          </BrandMark>
          <BrandText>
            <BrandName>土木工程网</BrandName>
            <BrandLink href="#">www.civilcn.com</BrandLink>
          </BrandText>
        </Brand>
      </Stage>
    </>
  );
}
